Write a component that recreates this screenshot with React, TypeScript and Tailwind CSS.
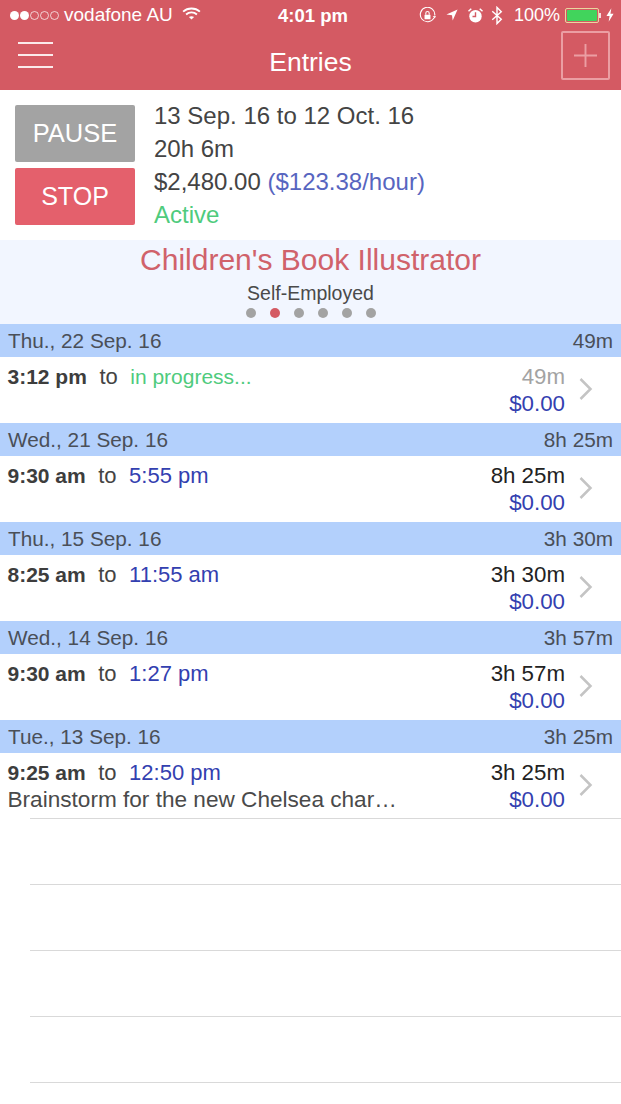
const entries = [
  { day: "Thu., 22 Sep. 16", total: "49m", start: "3:12 pm", end: "in progress...", active: true },
  { day: "Wed., 21 Sep. 16", total: "8h 25m", start: "9:30 am", end: "5:55 pm" },
  { day: "Thu., 15 Sep. 16", total: "3h 30m", start: "8:25 am", end: "11:55 am" },
  { day: "Wed., 14 Sep. 16", total: "3h 57m", start: "9:30 am", end: "1:27 pm" },
  { day: "Tue., 13 Sep. 16", total: "3h 25m", start: "9:25 am", end: "12:50 pm", note: "Brainstorm for the new Chelsea char…" },
];

function StatusBar() {
  return (
    <div className="h-[30px] flex items-center justify-between pl-[10px] pr-[7px] text-white text-[19px] relative">
      <div className="flex items-center">
        <div className="flex gap-[1px] mr-[5px]">
          {[0, 1, 2, 3, 4].map((i) => (
            <span
              key={i}
              className={i < 2 ? "w-[9px] h-[9px] rounded-full bg-white" : "w-[9px] h-[9px] rounded-full border border-white/70"}
            />
          ))}
        </div>
        <span>vodafone AU</span>
        {/* Wifi */}
        <svg width="19" height="14" viewBox="0 0 20 15" className="ml-[9px] -mt-[2px]" fill="none" stroke="white" strokeWidth="2">
          <path d="M1 5 C6 0.5 14 0.5 19 5" />
          <path d="M4.2 8 C7.5 5 12.5 5 15.8 8" />
          <path d="M10 13.5 L7.2 10.8 C8.8 9.5 11.2 9.5 12.8 10.8 Z" fill="white" stroke="none" />
        </svg>
      </div>
      <span className="absolute left-[278px] top-[2px] font-bold text-[18.5px]">4:01 pm</span>
      <div className="flex items-center">
        {/* Rotation lock */}
        <svg width="17" height="17" viewBox="0 0 20 20" fill="none" stroke="white" strokeWidth="1.3">
          <path d="M17.5 13 A8.5 8.5 0 1 1 18.5 10" />
          <path d="M16 11 L18.5 13.5 L20 10.5 Z" fill="white" stroke="none" />
          <rect x="6.5" y="9" width="7" height="5.5" fill="white" stroke="none" rx="0.5" />
          <path d="M8 9 V7.3 a2 2 0 0 1 4 0 V9" />
        </svg>
        {/* Location */}
        <svg width="12" height="12" viewBox="0 0 14 14" className="ml-[10px]" fill="white">
          <path d="M13.5 0.5 L0.5 6.5 L7 7.2 L7.8 13.5 Z" />
        </svg>
        {/* Alarm */}
        <svg width="15" height="15" viewBox="0 0 16 16" className="ml-[10px]">
          <circle cx="8" cy="8.8" r="6.6" fill="white" />
          <path d="M8 4.5 V9 H4.8" fill="none" stroke="#d45a63" strokeWidth="1.5" />
          <path d="M0.5 3.5 L3.5 0.8 M15.5 3.5 L12.5 0.8" stroke="white" strokeWidth="1.6" />
        </svg>
        {/* Bluetooth */}
        <svg width="12" height="19" viewBox="0 0 12 20" className="ml-[8px]" fill="none" stroke="white" strokeWidth="1.5">
          <path d="M1 5.5 L10.5 14 L6 18.5 V1.5 L10.5 6 L1 14.5" />
        </svg>
        <span className="ml-[11px] text-[18px]">100%</span>
        {/* Battery */}
        <div className="ml-[5px] w-[34px] h-[15px] rounded-[2px] border border-[#e9d7a0] p-[1px]">
          <div className="w-full h-full rounded-[1px] bg-[#41d45c]" />
        </div>
        <div className="w-[2px] h-[5px] bg-white/80" />
        <svg width="8" height="14" viewBox="0 0 9 15" className="ml-[5px]" fill="white">
          <path d="M6 0 L0.5 8.5 H4 L3 15 L8.5 6 H5 Z" />
        </svg>
      </div>
    </div>
  );
}

function NavBar() {
  return (
    <div className="h-[60px] flex items-start justify-between relative">
      <div className="ml-[18px] mt-[12px] w-[35px] flex flex-col gap-[10px]">
        <span className="h-[2px] bg-[#fbeaeb]" />
        <span className="h-[2px] bg-[#fbeaeb]" />
        <span className="h-[2px] bg-[#fbeaeb]" />
      </div>
      <h1 className="absolute left-0 right-0 top-[15px] text-center text-white text-[26.5px] leading-[34px]">Entries</h1>
      <div className="mr-[11px] mt-[1px] w-[49px] h-[49px] rounded-[2px] border-2 border-[#eb9ea3] flex items-center justify-center">
        <svg width="23" height="23" viewBox="0 0 24 24" stroke="#eb9ea3" strokeWidth="2">
          <path d="M12 0 V24 M0 12 H24" />
        </svg>
      </div>
    </div>
  );
}

function Summary() {
  return (
    <div className="h-[150px] bg-white flex pt-[15px] pl-[15px]">
      <div className="w-[120px] flex flex-col gap-[6px]">
        <button className="h-[57px] rounded-[2px] bg-[#a3a3a3] text-white text-[25.5px]">PAUSE</button>
        <button className="h-[57px] rounded-[2px] bg-[#e4606c] text-white text-[25px]">STOP</button>
      </div>
      <div className="ml-[19px] -mt-[6px] text-[24px] leading-[33px] text-[#444444]">
        <div>13 Sep. 16 to 12 Oct. 16</div>
        <div>20h 6m</div>
        <div>
          $2,480.00 <span className="text-[#5765c0]">($123.38/hour)</span>
        </div>
        <div className="text-[#4fcb7d]">Active</div>
      </div>
    </div>
  );
}

function JobTitle() {
  return (
    <div className="h-[84px] bg-[#f2f6ff] flex flex-col items-center">
      <div className="text-[30px] leading-[38px] mt-[1px] text-[#d0626b]">Children's Book Illustrator</div>
      <div className="text-[19.5px] leading-[26px] mt-[1px] text-[#4a4a4a]">Self-Employed</div>
      <div className="flex gap-[14px] mt-[2px]">
        {[0, 1, 2, 3, 4, 5].map((i) => (
          <span key={i} className={i == 1 ? "w-[10px] h-[10px] rounded-full bg-[#d45a63]" : "w-[10px] h-[10px] rounded-full bg-[#a3a3a3]"} />
        ))}
      </div>
    </div>
  );
}

function Entry({ entry }: { entry: (typeof entries)[number] }) {
  return (
    <>
      <div className="h-[33px] bg-[#b3d0fc] flex items-center justify-between px-[8px] text-[20.75px] text-[#4a4f58]">
        <span>{entry.day}</span>
        <span>{entry.total}</span>
      </div>
      <div className="h-[66px] bg-white flex pl-[7.5px] pr-[29px] relative">
        <div className="flex-1 pt-[6px] text-[22px] leading-[27px]">
          <div className="whitespace-pre">
            <span className="font-bold text-[21px] text-[#3d3d3d]">{entry.start}</span>
            <span className="text-[#444444] ml-[12.5px]">to</span>
            <span className={entry.active ? "ml-[12.5px] text-[21px] text-[#4fcb7d]" : "ml-[12.5px] text-[#3340b0]"}>{entry.end}</span>
          </div>
          {entry.note && <div className="text-[#4a4a4a] text-[22.6px]">{entry.note}</div>}
        </div>
        <div className="pr-[27px] pt-[6px] text-right text-[22.3px] leading-[27px]">
          <div className={entry.active ? "text-[#a3a3a3]" : "text-[#222222]"}>{entry.total}</div>
          <div className="text-[#3340b0]">$0.00</div>
        </div>
        {/* Disclosure chevron */}
        <svg width="14" height="24" viewBox="0 0 14 24" className="absolute right-[28px] top-[20px]" fill="none" stroke="#c4c4c4" strokeWidth="2.5">
          <path d="M1.5 2 L11.5 12 L1.5 22" />
        </svg>
      </div>
    </>
  );
}

export default function App() {
  return (
    <div className="w-[621px] h-[1104px] bg-white overflow-hidden font-['Liberation_Sans',Arial,sans-serif]">
      <div className="h-[90px] bg-[#d45a63]">
        <StatusBar />
        <NavBar />
      </div>
      <Summary />
      <JobTitle />
      {entries.map((entry) => (
        <Entry key={entry.day} entry={entry} />
      ))}
      {/* Empty table rows */}
      <div className="relative -mt-[1px] pl-[30px]">
        {[0, 1, 2, 3, 4].map((i) => (
          <div key={i} className="h-[66px] border-t border-[#d9d9d9]" />
        ))}
      </div>
    </div>
  );
}
